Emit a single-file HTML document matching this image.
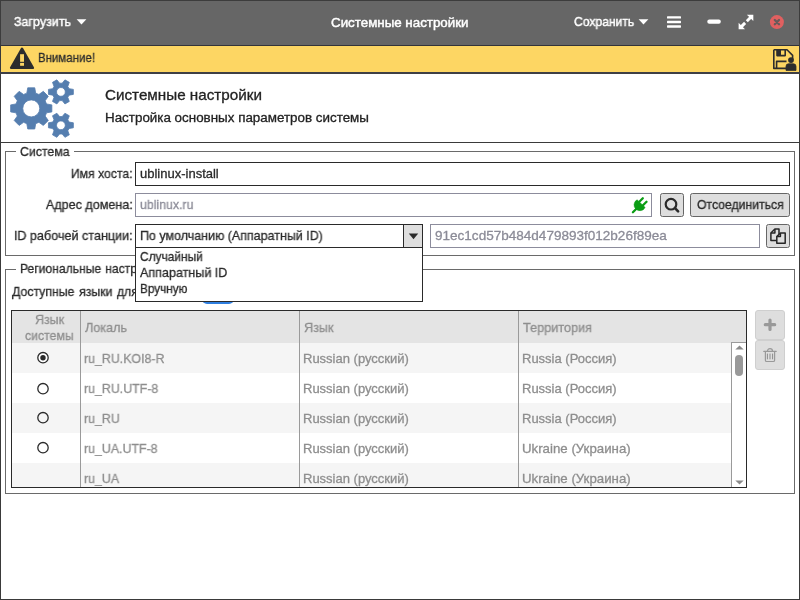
<!DOCTYPE html>
<html lang="ru">
<head>
<meta charset="utf-8">
<title>Системные настройки</title>
<style>
*{box-sizing:border-box;margin:0;padding:0}
html,body{width:800px;height:600px;overflow:hidden;background:#fff}
body{font-family:"Liberation Sans",sans-serif;font-size:13px;color:#2a2a2a;position:relative}
.abs{position:absolute}
.t{position:absolute;white-space:nowrap;line-height:1;transform-origin:0 0;will-change:transform;-webkit-text-stroke:.3px currentColor}
#win{position:absolute;left:0;top:0;width:800px;height:600px;border:1px solid #3a3a3a;border-top:none}
/* header bar */
#hdr{position:absolute;left:0;top:0;width:800px;height:46px;background:#666;border-top:1px solid #3c3c3c;border-bottom:1px solid #33343a;border-left:1px solid #3c3c3c;border-right:1px solid #3c3c3c}
#hdr .t{color:#fff;font-size:14px}
/* warning bar */
#warn{position:absolute;left:1px;top:46px;width:798px;height:26px;background:#fdd663}
#warnline{position:absolute;left:0;top:72px;width:800px;height:2px;background:#3e3f45}
#sep{position:absolute;left:0;top:142px;width:800px;height:1px;background:#3a3a3a}
/* frames */
.frame{position:absolute;border:1px solid #6a6a6a}
.legend{position:absolute;background:#fff;height:12px}
.inp{position:absolute;height:24px;border:1px solid #2a2a2a;background:#fff}
.inp.dis{border-color:#8c8c9c}
.btn{position:absolute;background:#dedede;border:1px solid #666;border-radius:2.5px}
.gray{color:#8e8e8e}
.dis-t{color:#8b8b97}

/* per-text horizontal scale to match reference glyph widths */
#h_load{transform:scaleX(.960);-webkit-text-stroke:.45px #fff}
#h_title{transform:scaleX(1.026);-webkit-text-stroke:.45px #fff}
#h_save{transform:scaleX(.933);-webkit-text-stroke:.45px #fff}
#w_text{transform:scaleX(.883)}
#ttl{transform:scaleX(1.0145)}
#sub{transform:scaleX(1.071)}
#lg1{transform:scaleX(.945)}
.lab{transform-origin:100% 0;transform:scaleX(.968)}
#l_host{transform:scaleX(.942)}
#v_dom{transform:scaleX(.947)}
#b_disc{transform:scaleX(.94)}
#v_id{transform:scaleX(1.041)}
#cb{transform:scaleX(.959)}
#o1{transform:scaleX(.916)}
#o2{transform:scaleX(.9655)}
#o3{transform:scaleX(.903)}
#lg2{transform:scaleX(.933);word-spacing:.6px}
#l_lang{transform:scaleX(.945);word-spacing:1.2px}

.c2{transform:scaleX(.952)}
#th1a{transform:scaleX(.955)}
#th1b{transform:scaleX(.945)}
#th2,#th3{transform:scaleX(.97)}
#th4{transform:scaleX(.975)}
#r4c4,#r5c4{transform:scaleX(1.02)}
</style>
</head>
<body>
<div id="win"></div>

<!-- ===== header bar ===== -->
<div id="hdr"></div>
<div class="t" id="h_load" style="left:14px;top:15px;font-size:13px;color:#fff">Загрузить</div>
<svg class="abs" style="left:76px;top:19px" width="11" height="6" viewBox="0 0 11 6"><path d="M0.6 0.3 H10.4 L5.5 5.6 Z" fill="#fff"/></svg>
<div class="t" id="h_title" style="left:331px;top:16px;font-size:13px;color:#fff">Системные настройки</div>
<div class="t" id="h_save" style="left:574px;top:15px;font-size:13px;color:#fff">Сохранить</div>
<svg class="abs" style="left:638px;top:19px" width="11" height="6" viewBox="0 0 11 6"><path d="M0.6 0.3 H10.4 L5.5 5.6 Z" fill="#fff"/></svg>
<!-- hamburger -->
<svg class="abs" style="left:666px;top:15px" width="16" height="14" viewBox="0 0 16 14"><g fill="#fff"><rect x="1" y="1.2" width="14" height="2.4" rx=".6"/><rect x="1" y="5.8" width="14" height="2.4" rx=".6"/><rect x="1" y="10.3" width="14" height="2.4" rx=".6"/></g></svg>
<!-- minimize -->
<svg class="abs" style="left:706px;top:18px" width="16" height="8" viewBox="0 0 16 8"><rect x="1.3" y="1.6" width="13.5" height="4.2" rx="2" fill="#fff"/></svg>
<!-- maximize -->
<svg class="abs" style="left:737px;top:14px" width="18" height="16" viewBox="0 0 18 16"><g fill="#fff"><path d="M16.3 0.7 H9.9 L16.3 7.1 Z"/><path d="M1.6 15.2 V8.8 L8 15.2 Z"/></g><path d="M14 3 L9.8 7.2 M8.1 8.9 L3.9 13.1" stroke="#fff" stroke-width="2.9" fill="none"/></svg>
<!-- close -->
<svg class="abs" style="left:769px;top:14px" width="16" height="16" viewBox="0 0 16 16"><circle cx="7.9" cy="8.1" r="7" fill="#e06060"/><path d="M5.8 6 L10 10.2 M10 6 L5.8 10.2" stroke="#675a5a" stroke-width="2.3" stroke-linecap="round"/></svg>

<!-- ===== warning bar ===== -->
<div id="warn"></div>
<div id="warnline"></div>
<svg class="abs" style="left:9px;top:46px" width="26" height="25" viewBox="0 0 26 25"><path d="M13 2.9 L23.8 21.8 H2.2 Z" fill="#2d2d2d" stroke="#2d2d2d" stroke-width="2.6" stroke-linejoin="round"/><rect x="11.1" y="8.2" width="3.9" height="7.6" fill="#fdd663"/><rect x="11.1" y="16.9" width="3.9" height="2.9" fill="#fdd663"/></svg>
<div class="t" id="w_text" style="left:38px;top:51px;font-size:13px;color:#2d2d2d">Внимание!</div>
<!-- save-as-user icon -->
<svg class="abs" style="left:772px;top:48px" width="26" height="24" viewBox="0 0 26 24"><g fill="none" stroke="#2d2d2d" stroke-width="1.6" stroke-linejoin="round"><path d="M1.8 1.8 H15 L20.6 7.4 V12"/><path d="M1.8 1.8 V20.4 H14"/><path d="M4.6 20.4 V13.4 H14.5"/><path d="M5 2 V7.6 H13.2 V2"/></g><rect x="5" y="2" width="4" height="5.6" fill="#2d2d2d"/><circle cx="19" cy="12.1" r="2.9" fill="#2d2d2d"/><path d="M14 22.4 V18.4 Q14 15.8 16.6 15.8 H21.4 Q24 15.8 24 18.4 V22.4 Z" fill="#2d2d2d" stroke="#2d2d2d" stroke-width=".8" stroke-linejoin="round"/></svg>

<!-- ===== title block ===== -->
<div id="sep"></div>
<!-- gears icon -->
<svg class="abs" id="gears" style="left:8px;top:76px" width="70" height="66" viewBox="0 0 70 66"><g fill="#557eaf" fill-rule="evenodd" stroke="#557eaf" stroke-width="0.8" stroke-linejoin="round"><path d="M27.69 47.67 L26.76 53.00 L19.74 53.00 L18.81 47.67 L15.59 46.33 L11.17 49.45 L6.20 44.48 L9.32 40.06 L7.98 36.84 L2.65 35.91 L2.65 28.89 L7.98 27.96 L9.32 24.74 L6.20 20.32 L11.17 15.35 L15.59 18.47 L18.81 17.13 L19.74 11.80 L26.76 11.80 L27.69 17.13 L30.91 18.47 L35.33 15.35 L40.30 20.32 L37.18 24.74 L38.52 27.96 L43.85 28.89 L43.85 35.91 L38.52 36.84 L37.18 40.06 L40.30 44.48 L35.33 49.45 L30.91 46.33 Z M31.75 32.40 A8.5 8.5 0 1 0 14.75 32.40 A8.5 8.5 0 1 0 31.75 32.40 Z"/><path d="M61.08 12.66 L65.35 13.39 L65.35 18.41 L61.08 19.14 L59.80 21.37 L61.30 25.43 L56.95 27.94 L54.19 24.61 L51.61 24.61 L48.85 27.94 L44.50 25.43 L46.00 21.37 L44.72 19.14 L40.45 18.41 L40.45 13.39 L44.72 12.66 L46.00 10.43 L44.50 6.37 L48.85 3.86 L51.61 7.19 L54.19 7.19 L56.95 3.86 L61.30 6.37 L59.80 10.43 Z M57.30 15.90 A4.4 4.4 0 1 0 48.50 15.90 A4.4 4.4 0 1 0 57.30 15.90 Z"/><path d="M61.08 46.06 L65.35 46.79 L65.35 51.81 L61.08 52.54 L59.80 54.77 L61.30 58.83 L56.95 61.34 L54.19 58.01 L51.61 58.01 L48.85 61.34 L44.50 58.83 L46.00 54.77 L44.72 52.54 L40.45 51.81 L40.45 46.79 L44.72 46.06 L46.00 43.83 L44.50 39.77 L48.85 37.26 L51.61 40.59 L54.19 40.59 L56.95 37.26 L61.30 39.77 L59.80 43.83 Z M57.30 49.30 A4.4 4.4 0 1 0 48.50 49.30 A4.4 4.4 0 1 0 57.30 49.30 Z"/></g></svg>

<div class="t" id="ttl" style="left:105px;top:87px;font-size:15px;color:#222">Системные настройки</div>
<div class="t" id="sub" style="left:105px;top:112px;font-size:12.5px;color:#222">Настройка основных параметров системы</div>

<!-- ===== frame: Система ===== -->
<div class="frame" style="left:5px;top:151px;width:790px;height:105px"></div>
<div class="legend" style="left:16px;top:146px;width:58px"></div>
<div class="t" id="lg1" style="left:20px;top:145px">Система</div>

<div class="t lab" id="l_host" style="right:667.3px;top:167px">Имя хоста:</div>
<div class="inp" style="left:135px;top:162px;width:655px"></div>
<div class="t" id="v_host" style="left:140px;top:167px">ublinux-install</div>

<div class="t lab" id="l_dom" style="right:667.3px;top:198px">Адрес домена:</div>
<div class="inp dis" style="left:135px;top:193px;width:517px"></div>
<div class="t dis-t" id="v_dom" style="left:140px;top:198px">ublinux.ru</div>
<!-- plug icon -->
<svg class="abs" style="left:631px;top:196px" width="18" height="18" viewBox="0 0 18 18"><g stroke="#0a9d14" stroke-linecap="round" fill="none"><path d="M1.9 16.2 L5.4 12.7" stroke-width="2.3"/><path d="M8.3 5.8 L11.8 2.3" stroke-width="2.3"/><path d="M12 9.3 L15.5 5.8" stroke-width="2.3"/></g><path d="M6.05 3.8 A5.8 5.8 0 1 0 14.1 11.4 Z" fill="#0a9d14" stroke="#0a9d14" stroke-width=".6" stroke-linejoin="round"/></svg>
<!-- search button -->
<div class="btn" style="left:660px;top:193px;width:24px;height:24px"></div>
<svg class="abs" style="left:660px;top:193px" width="24" height="24" viewBox="0 0 24 24"><circle cx="11" cy="11.2" r="5.3" fill="none" stroke="#2a2a2a" stroke-width="2.2"/><path d="M15 15.2 L18.1 18.3" stroke="#2a2a2a" stroke-width="2.6" stroke-linecap="round"/></svg>
<!-- disconnect button -->
<div class="btn" style="left:690px;top:193px;width:100px;height:24px"></div>
<div class="t" id="b_disc" style="left:697px;top:198px">Отсоединиться</div>

<div class="t lab" id="l_id" style="right:667.3px;top:229px">ID рабочей станции:</div>
<div class="inp dis" style="left:430px;top:224px;width:330px"></div>
<div class="t dis-t" id="v_id" style="left:435px;top:229px">91ec1cd57b484d479893f012b26f89ea</div>
<!-- copy button -->
<div class="btn" style="left:766px;top:224px;width:24px;height:24px"></div>
<svg class="abs" style="left:766px;top:224px" width="24" height="24" viewBox="0 0 24 24"><g fill="#dedede" stroke="#262626" stroke-width="1.5" stroke-linejoin="round"><path d="M4.9 9 L8.9 5 H13 V16.4 H4.9 Z"/><path d="M8.9 5 V9 H4.9" fill="none"/><path d="M10.8 12.6 L14.4 9 H19.2 V19.3 H10.8 Z"/><path d="M14.4 9 V12.6 H10.8" fill="none"/></g></svg>

<!-- ===== frame: Региональные настройки ===== -->
<div class="frame" style="left:5px;top:269px;width:790px;height:225px"></div>
<div class="legend" style="left:16px;top:264px;width:150px"></div>
<div class="t" id="lg2" style="left:20px;top:262px">Региональные настройки</div>
<div class="t" id="l_lang" style="left:12px;top:285px">Доступные языки для системы:</div>
<!-- toggle switch (mostly hidden behind popup) -->
<div class="abs" style="left:202px;top:282px;width:32px;height:22px;border-radius:5px;background:#2f7fe0"></div>

<!-- ===== table ===== -->
<div class="abs" id="tbl" style="left:11px;top:310px;width:736px;height:178px;border:1px solid #2a2a2a;background:#fff;overflow:hidden">
  <div class="abs" style="left:0;top:0;width:734px;height:32px;background:#e4e4e4"></div>
  <div class="abs" style="left:0;top:32px;width:719px;height:30px;background:#f5f5f5"></div>
  <div class="abs" style="left:0;top:92px;width:719px;height:30px;background:#f5f5f5"></div>
  <div class="abs" style="left:0;top:152px;width:719px;height:30px;background:#f5f5f5"></div>
  <div class="abs" style="left:68px;top:0;width:1px;height:176px;background:#9a9a9a"></div>
  <div class="abs" style="left:287px;top:0;width:1px;height:176px;background:#9a9a9a"></div>
  <div class="abs" style="left:506px;top:0;width:1px;height:176px;background:#9a9a9a"></div>
  <!-- scrollbar -->
  <div class="abs" style="left:719px;top:31px;width:15px;height:145px;background:#fff;border-left:1px solid #9a9a9a;border-top:1px solid #9a9a9a"></div>
</div>
<svg class="abs" style="left:735px;top:345px" width="9" height="5" viewBox="0 0 9 5"><path d="M0.3 4.6 L4.5 0.4 L8.7 4.6 Z" fill="#8a8a8a"/></svg>
<svg class="abs" style="left:735px;top:480px" width="9" height="5" viewBox="0 0 9 5"><path d="M0.3 0.4 L4.5 4.6 L8.7 0.4 Z" fill="#8a8a8a"/></svg>
<div class="abs" style="left:735px;top:355px;width:8px;height:21px;border-radius:4px;background:#999"></div>

<!-- header cells -->
<div class="t gray hd" id="th1a" style="left:35px;top:313px">Язык</div>
<div class="t gray hd" id="th1b" style="left:25px;top:329px">системы</div>
<div class="t gray hd" id="th2" style="left:85px;top:321px">Локаль</div>
<div class="t gray hd" id="th3" style="left:304px;top:321px">Язык</div>
<div class="t gray hd" id="th4" style="left:523px;top:321px">Территория</div>

<!-- rows -->
<div class="t gray c2" id="r1c2" style="left:84px;top:352px">ru_RU.KOI8-R</div>
<div class="t gray" id="r1c3" style="left:303px;top:352px">Russian (русский)</div>
<div class="t gray" id="r1c4" style="left:522px;top:352px">Russia (Россия)</div>
<div class="t gray c2" id="r2c2" style="left:84px;top:382px">ru_RU.UTF-8</div>
<div class="t gray" id="r2c3" style="left:303px;top:382px">Russian (русский)</div>
<div class="t gray" id="r2c4" style="left:522px;top:382px">Russia (Россия)</div>
<div class="t gray c2" id="r3c2" style="left:84px;top:412px">ru_RU</div>
<div class="t gray" id="r3c3" style="left:303px;top:412px">Russian (русский)</div>
<div class="t gray" id="r3c4" style="left:522px;top:412px">Russia (Россия)</div>
<div class="t gray c2" id="r4c2" style="left:84px;top:442px">ru_UA.UTF-8</div>
<div class="t gray" id="r4c3" style="left:303px;top:442px">Russian (русский)</div>
<div class="t gray" id="r4c4" style="left:522px;top:442px">Ukraine (Украина)</div>
<div class="t gray c2" id="r5c2" style="left:84px;top:472px">ru_UA</div>
<div class="t gray" id="r5c3" style="left:303px;top:472px">Russian (русский)</div>
<div class="t gray" id="r5c4" style="left:522px;top:472px">Ukraine (Украина)</div>
<div class="abs" style="left:12px;top:487px;width:735px;height:1px;background:#2a2a2a"></div>
<div class="abs" style="left:6px;top:488px;width:788px;height:5px;background:#fff"></div>

<!-- radios -->
<svg class="abs" style="left:36px;top:350px" width="14" height="14" viewBox="0 0 14 14"><circle cx="7" cy="7.7" r="5.2" fill="#fff" stroke="#2a2a2a" stroke-width="1.3"/><circle cx="7" cy="7.7" r="2.7" fill="#2a2a2a"/></svg>
<svg class="abs" style="left:36px;top:381px" width="14" height="14" viewBox="0 0 14 14"><circle cx="7" cy="7.7" r="5.2" fill="none" stroke="#2a2a2a" stroke-width="1.3"/></svg>
<svg class="abs" style="left:36px;top:410px" width="14" height="14" viewBox="0 0 14 14"><circle cx="7" cy="7.7" r="5.2" fill="none" stroke="#2a2a2a" stroke-width="1.3"/></svg>
<svg class="abs" style="left:36px;top:440px" width="14" height="14" viewBox="0 0 14 14"><circle cx="7" cy="7.7" r="5.2" fill="none" stroke="#2a2a2a" stroke-width="1.3"/></svg>

<!-- side buttons -->
<div class="abs" style="left:755px;top:310px;width:30px;height:30px;background:#dedede;border:1px solid #cfcfcf;border-radius:3px"></div>
<div class="abs" style="left:755px;top:340px;width:30px;height:30px;background:#dedede;border:1px solid #cfcfcf;border-radius:3px"></div>
<svg class="abs" style="left:762px;top:317px" width="16" height="16" viewBox="0 0 16 16"><path d="M8 3 V12.4 M3.3 7.7 H12.7" stroke="#999" stroke-width="3.2" stroke-linecap="round"/></svg>
<svg class="abs" style="left:762px;top:347px" width="16" height="16" viewBox="0 0 16 16"><g fill="none" stroke="#999" stroke-width="1.2" stroke-linecap="round"><path d="M1.8 4.4 H14.2"/><path d="M5.5 4.2 Q5.5 1.7 8 1.7 Q10.5 1.7 10.5 4.2"/><path d="M3.4 4.6 V13.2 Q3.4 14.5 4.7 14.5 H11.3 Q12.6 14.5 12.6 13.2 V4.6"/></g><path d="M5.4 6.6 V12.3 M8 6.6 V12.3 M10.6 6.6 V12.3" stroke="#8c8c8c" stroke-width="1" fill="none"/></svg>

<!-- ===== combobox + popup (on top) ===== -->
<div class="abs" style="left:135px;top:247px;width:288px;height:55px;background:#fff;border:1px solid #2a2a2a"></div>
<div class="inp" style="left:135px;top:224px;width:288px"></div>
<div class="abs" style="left:403px;top:225px;width:19px;height:22px;background:#dedede;border-left:1px solid #2a2a2a"></div>
<svg class="abs" style="left:408px;top:233px" width="11" height="7" viewBox="0 0 11 7"><path d="M0.8 0.6 H10.2 L5.5 6.2 Z" fill="#2a2a2a"/></svg>
<div class="t" id="cb" style="left:140px;top:229px">По умолчанию (Аппаратный ID)</div>
<div class="t" id="o1" style="left:140px;top:250px">Случайный</div>
<div class="t" id="o2" style="left:140px;top:266px">Аппаратный ID</div>
<div class="t" id="o3" style="left:140px;top:282px">Вручную</div>

</body>
</html>
